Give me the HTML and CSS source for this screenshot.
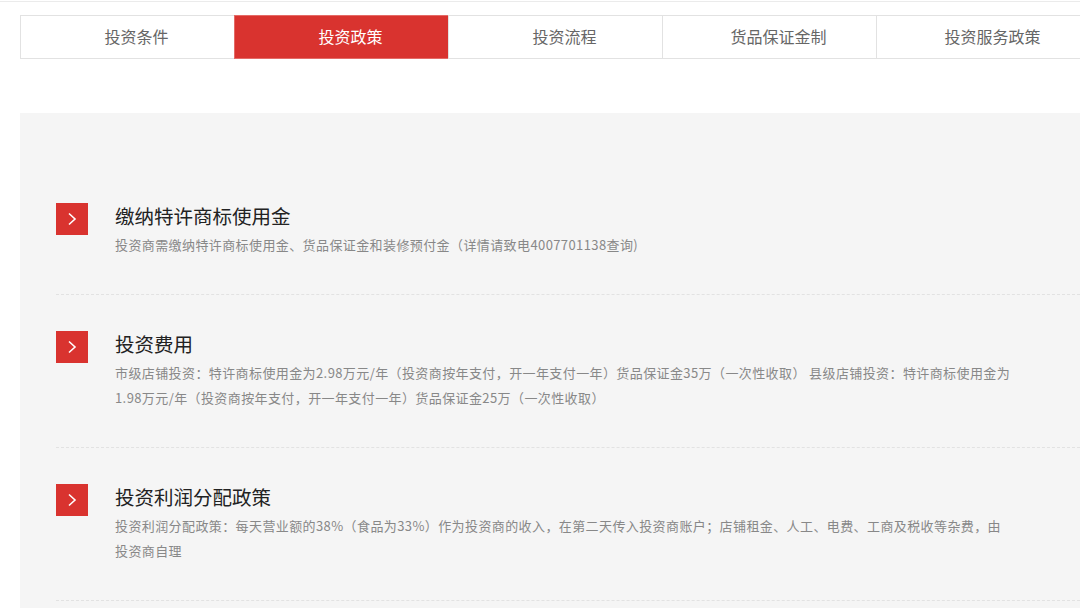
FILE: index.html
```html
<!DOCTYPE html>
<html lang="zh-CN">
<head>
<meta charset="utf-8">
<title>投资政策</title>
<link rel="stylesheet" href="styles.css">
</head>
<body>
<div class="topline"></div>
<div class="page">
  <nav class="tabs">
    <div class="tab">投资条件</div>
    <div class="tab active">投资政策</div>
    <div class="tab">投资流程</div>
    <div class="tab">货品保证金制</div>
    <div class="tab">投资服务政策</div>
  </nav>
  <section class="panel">
    <div class="item">
      <div class="icon"><svg width="32" height="32" viewBox="0 0 32 32"><polyline points="13,10.5 19,16 13,21.5" fill="none" stroke="#fff" stroke-width="1.6"/></svg></div>
      <div class="body">
        <h3 class="title">缴纳特许商标使用金</h3>
        <p class="desc">投资商需缴纳特许商标使用金、货品保证金和装修预付金（详情请致电4007701138查询)</p>
      </div>
    </div>
    <div class="item">
      <div class="icon"><svg width="32" height="32" viewBox="0 0 32 32"><polyline points="13,10.5 19,16 13,21.5" fill="none" stroke="#fff" stroke-width="1.6"/></svg></div>
      <div class="body">
        <h3 class="title">投资费用</h3>
        <p class="desc">市级店铺投资：特许商标使用金为2.98万元/年（投资商按年支付，开一年支付一年）货品保证金35万（一次性收取） 县级店铺投资：特许商标使用金为1.98万元/年（投资商按年支付，开一年支付一年）货品保证金25万（一次性收取）</p>
      </div>
    </div>
    <div class="item">
      <div class="icon"><svg width="32" height="32" viewBox="0 0 32 32"><polyline points="13,10.5 19,16 13,21.5" fill="none" stroke="#fff" stroke-width="1.6"/></svg></div>
      <div class="body">
        <h3 class="title">投资利润分配政策</h3>
        <p class="desc">投资利润分配政策：每天营业额的38%（食品为33%）作为投资商的收入，在第二天传入投资商账户；店铺租金、人工、电费、工商及税收等杂费，由投资商自理</p>
      </div>
    </div>
  </section>
</div>
</body>
</html>
```
FILE: styles.css
```css
html, body {
  margin: 0;
  padding: 0;
  background: #fff;
  overflow: hidden;
  font-family: "Noto Sans CJK SC", "Noto Sans", sans-serif;
}

.topline {
  margin-top: 1px;
  height: 1px;
  background: #ebebeb;
}

.page {
  width: 1070px;
  margin-left: 20px;
  padding-top: 13px;
}

.tabs {
  display: flex;
}

.tab {
  box-sizing: border-box;
  flex: 0 0 215px;
  height: 44px;
  margin-left: -1px;
  border: 1px solid #e2e2e2;
  padding: 0 0 2px 18px;
  display: flex;
  align-items: center;
  justify-content: center;
  font-size: 16px;
  color: #666;
}

.tab:first-child {
  margin-left: 0;
}

.tab.active {
  background: #d9332f;
  border-color: #e46a66;
  color: #fff;
}

.panel {
  margin-top: 54px;
  background: #f5f5f5;
  padding: 54px 0 0 36px;
  min-height: 500px;
}

.item {
  display: flex;
  padding: 36px 0 37px;
  border-bottom: 1px dashed #e2e2e2;
}

.icon {
  flex: 0 0 32px;
  width: 32px;
  height: 32px;
  background: #d9332f;
  margin-right: 27px;
}

.icon svg {
  display: block;
}

.body {
  flex: 1;
}

.title {
  margin: 0;
  font-size: 19.5px;
  line-height: 26px;
  font-weight: 400;
  color: #222;
}

.desc {
  margin: 3px 0 0;
  max-width: 898px;
  font-size: 13px;
  line-height: 25px;
  letter-spacing: 0.4px;
  color: #888;
}
```
